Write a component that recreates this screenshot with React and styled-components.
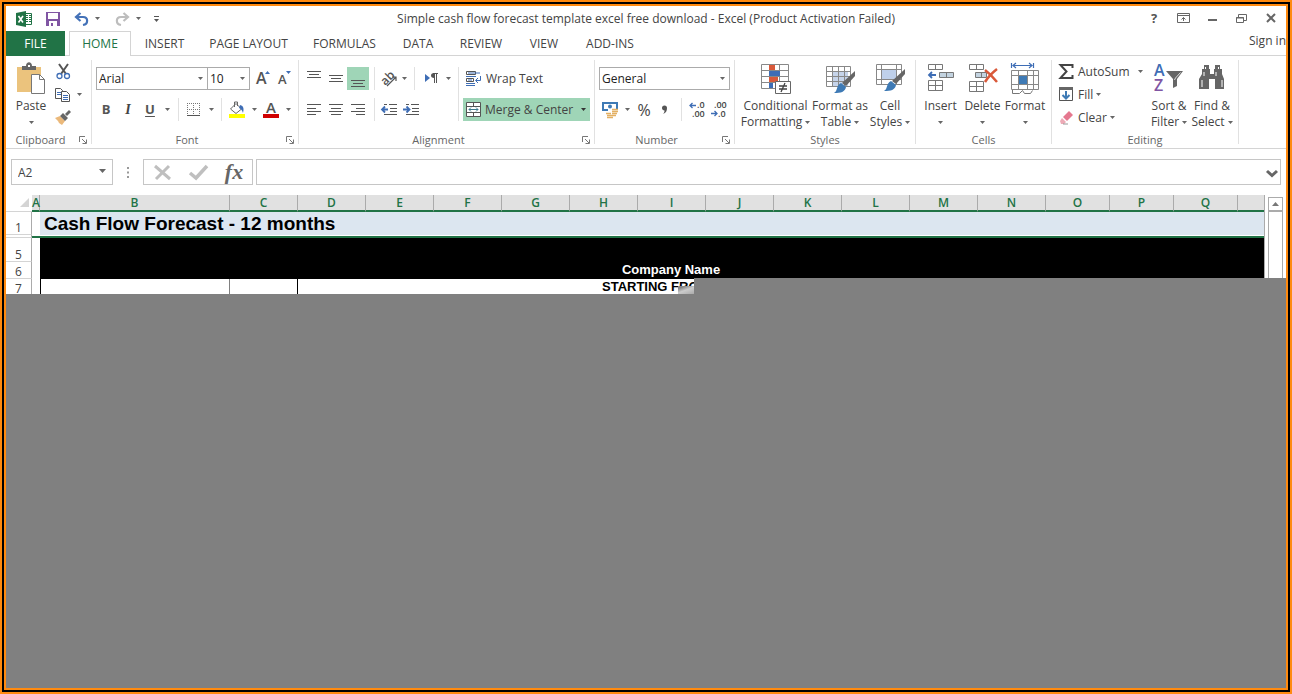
import React, { useState } from 'react';
import styled, { createGlobalStyle } from 'styled-components';

const GlobalStyle = createGlobalStyle`
  * {
    box-sizing: border-box;
  }
  body {
    margin: 0;
    font-family: "Open Sans", "Noto Sans", sans-serif;
    font-size: 12px;
    line-height: 16px;
    color: #444;
  }
  button, input, select {
    font: inherit;
    color: inherit;
  }
  svg {
    overflow: visible;
  }
`

const Frame = styled.div`
  border: 2px solid #ff8a0f;
  background: #000;
  padding: 2px;
  min-height: 100vh;
  display: flex;
`

const Window = styled.div`
  flex: 1;
  min-width: 0;
  border: 2px solid #ff8a0f;
  background: #fff;
  display: flex;
  flex-direction: column;
  overflow: hidden;
`

/* ---------- title bar ---------- */

const TitleBar = styled.header`
  height: 25px;
  display: grid;
  grid-template-columns: 1fr auto 1fr;
  align-items: center;
`

const QuickAccess = styled.div`
  display: flex;
  align-items: center;
  padding-left: 7px;
`

const WindowTitle = styled.h1`
  margin: 0;
  font-size: 12px;
  font-weight: 400;
  white-space: nowrap;
`

const WindowButtons = styled.div`
  display: flex;
  justify-content: flex-end;
`

const Tool = styled.button`
  width: ${p => p.$w || 22}px;
  height: 23px;
  flex: none;
  padding: 0;
  border: none;
  background: ${p => (p.$on ? '#9fd5b7' : 'none')};
  display: flex;
  align-items: center;
  justify-content: center;
  cursor: pointer;

  svg {
    display: block;
    flex: none;
  }
`

/* ---------- tabs ---------- */

const TabBar = styled.nav`
  height: 25px;
  display: flex;
  border-bottom: 1px solid #d4d4d4;
`

const FileTab = styled.button`
  width: 59px;
  height: 25px;
  border: none;
  padding: 0;
  background: #217346;
  color: #fff;
  cursor: pointer;
`

const Tab = styled.button`
  height: 25px;
  width: ${p => p.$w}px;
  padding: 0;
  border: 1px solid ${p => (p.$active ? '#d4d4d4' : 'transparent')};
  border-bottom: none;
  background: ${p => (p.$active ? '#fff' : 'none')};
  color: ${p => (p.$active ? '#217346' : '#444')};
  white-space: nowrap;
  cursor: pointer;
`

const TabGap = styled.span`
  width: 4px;
`

const ToolGap = styled.span`
  width: 8px;
`

const SignIn = styled.a`
  margin-left: auto;
  padding-top: 2px;
  color: #444;
  text-decoration: none;
  white-space: nowrap;
`

/* ---------- ribbon ---------- */

const Ribbon = styled.section`
  height: 93px;
  display: flex;
  border-bottom: 1px solid #d4d4d4;
`

const Group = styled.div`
  width: ${p => p.$w}px;
  flex: none;
  margin: 4px 0;
  border-right: 1px solid #e1e1e1;
  display: flex;
  flex-direction: column;
`

const GroupBody = styled.div`
  flex: 1;
  min-height: 0;
  display: flex;
  padding-left: ${p => p.$pad || 4}px;
`

const GroupFoot = styled.div`
  height: 16px;
  margin-bottom: -4px;
  display: flex;
  align-items: center;
  font-size: 11px;
  text-align: center;
  color: #666;
`

const GroupName = styled.span`
  flex: 1;
`

const Launcher = styled.button`
  width: 16px;
  height: 16px;
  padding: 0;
  border: none;
  background: none;
  display: flex;
  align-items: center;
  justify-content: center;
`

const Rows = styled.div`
  display: flex;
  flex-direction: column;
  gap: 8px;
  padding-top: 7px;
`

const Row = styled.div`
  display: flex;
  height: 23px;
`

const Divider = styled.span`
  width: ${p => p.$w || 9}px;
  flex: none;
  display: flex;
  justify-content: center;

  &::before {
    content: '';
    width: 1px;
    background: #e1e1e1;
  }
`

const TallDivider = styled(Divider)`
  margin-top: 7px;
  height: 54px;
`

const BigButton = styled.button`
  width: ${p => p.$w}px;
  flex: none;
  padding: 3px 0 0;
  border: none;
  background: none;
  display: flex;
  flex-direction: column;
  align-items: center;
  white-space: nowrap;
  cursor: pointer;

  > svg {
    margin-bottom: 3px;
    flex: none;
  }
`

const BigLine = styled.span`
  height: 16px;
  flex: none;
  display: flex;
  align-items: center;
  gap: 3px;
`

const SideTools = styled.div`
  display: flex;
  flex-direction: column;
`

const LabelTool = styled.button`
  height: 23px;
  width: ${p => (p.$w ? `${p.$w}px` : 'auto')};
  flex: none;
  padding: 0 4px 0 3px;
  border: none;
  background: ${p => (p.$on ? '#9fd5b7' : 'none')};
  display: flex;
  align-items: center;
  gap: 4px;
  white-space: nowrap;
  cursor: pointer;

  svg {
    flex: none;
  }
  svg:last-child:not(:first-child) {
    margin-left: auto;
  }
`

const EditTool = styled(LabelTool)`
  padding: 0;

  svg:last-child:not(:first-child) {
    margin-left: ${p => (p.$w ? 'auto' : '-1px')};
  }
`

const Glyph = styled.span`
  font-size: 14px;
  font-weight: 700;
  font-style: ${p => (p.$italic ? 'italic' : 'normal')};
  font-family: ${p => (p.$italic ? '"Liberation Serif", serif' : 'inherit')};
  text-decoration: ${p => (p.$under ? 'underline' : 'none')};
  text-underline-offset: 2px;
`

const SmallGlyph = styled(Glyph)`
  padding-bottom: 2px;
  font-size: 13px;
  color: #555;
`

const Percent = styled.span`
  font-size: 16px;
`

const Picker = styled.label`
  position: relative;
  display: block;
  width: ${p => p.$w}px;
  margin-left: ${p => (p.$joined ? -1 : 0)}px;

  select {
    appearance: none;
    width: 100%;
    height: 23px;
    padding: 0 2px;
    border: 1px solid #ababab;
    border-radius: 0;
    background: #fff;
    color: #222;
  }
  svg {
    position: absolute;
    right: 5px;
    top: 10px;
    pointer-events: none;
  }
`

const RibbonEnd = styled.div`
  flex: 1;
  display: flex;
  align-items: flex-end;
  justify-content: flex-end;
  padding-right: 5px;
`

/* ---------- formula bar ---------- */

const FormulaBar = styled.div`
  display: flex;
  align-items: stretch;
  height: 26px;
  margin: 10px 5px;
`

const NameBox = styled.label`
  position: relative;
  width: 102px;

  input {
    width: 100%;
    height: 26px;
    padding: 0 6px;
    border: 1px solid #c6c6c6;
  }
  svg {
    position: absolute;
    right: 7px;
    top: 10px;
  }
`

const Grip = styled.span`
  width: 30px;
  display: flex;
  align-items: center;
  justify-content: center;
`

const EntryButtons = styled.div`
  width: 110px;
  border: 1px solid #c6c6c6;
  display: flex;
  align-items: center;
`

const Fx = styled.span`
  font-family: "Liberation Serif", serif;
  font-size: 22px;
  font-style: italic;
  font-weight: 700;
  color: #666;
`

const FormulaField = styled.div`
  flex: 1;
  margin-left: 3px;
  border: 1px solid #c6c6c6;
  display: flex;
  align-items: center;

  input {
    flex: 1;
    min-width: 0;
    border: none;
    outline: none;
    background: none;
  }
`

/* ---------- sheet ---------- */

const SheetArea = styled.main`
  position: relative;
  display: flex;
  align-items: flex-start;
  height: 99px;
  overflow: hidden;
`

const Sheet = styled.table`
  flex: 1;
  min-width: 0;
  width: 100%;
  table-layout: fixed;
  border-collapse: separate;
  border-spacing: 0;
  border-right: 1px solid #ababab;
  font-family: "Liberation Sans", Arial, sans-serif;

  th, td {
    padding: 0;
  }
`

const ColHead = styled.th`
  height: 17px;
  background: #e1e1e1;
  border-right: 1px solid #ababab;
  border-bottom: 2px solid #217346;
  font-family: "Open Sans", "Noto Sans", sans-serif;
  font-size: 12px;
  line-height: 15px;
  font-weight: 600;
  color: #217346;

  &:last-child {
    border-right: none;
  }
`

const Corner = styled.td`
  height: 17px;
  border-bottom: 1px solid #d4d4d4;
  vertical-align: bottom;

  svg {
    display: block;
    margin: 0 3px 4px auto;
  }
`

const RowHead = styled.th`
  height: ${p => p.$h}px;
  border-right: 1px solid #ababab;
  border-bottom: 1px solid #d4d4d4;
  font-family: "Open Sans", "Noto Sans", sans-serif;
  font-size: 12px;
  line-height: 12px;
  font-weight: 400;
  vertical-align: bottom;
`

const HiddenRowHead = styled(RowHead)`
  line-height: 0;
`

const PlainCell = styled.td`
  background: #fff;
  border-left: ${p => (p.$start ? `1px solid ${p.$start}` : 'none')};
  border-right: ${p => (p.$edge ? `1px solid ${p.$edge}` : 'none')};
`

const TitleCell = styled.td`
  background: #dce6f0;
  padding-left: 4px !important;
  font-size: 19px;
  line-height: 22px;
  font-weight: 700;
  color: #000;
  vertical-align: bottom;
  white-space: nowrap;
`

const SelectedEdge = styled.td`
  border-top: 1px solid #fff;
  border-bottom: 2px solid #217346;
  background: #dce6f0;
`

const BlackCell = styled.td`
  background: #000;
  color: #fff;
  font-size: 13px;
  line-height: 16px;
  font-weight: 700;
  text-align: center;
  vertical-align: top;
  padding-left: 38px !important;
`

const StartCell = styled.td`
  background: #fff;
  color: #000;
  font-size: 13px;
  line-height: 16px;
  font-weight: 700;
  vertical-align: top;
  padding-left: 304px !important;
  white-space: nowrap;
`

const ScrollTrack = styled.div`
  align-self: stretch;
  width: 15px;
  margin: 2px 3px 0 3px;
  flex: none;
  border: 1px solid #ababab;
`

const ScrollUp = styled.button`
  width: 13px;
  height: 14px;
  padding: 0;
  border: none;
  border-bottom: 2px solid #ababab;
  background: #fff;
  display: flex;
  align-items: center;
  justify-content: center;
`

const Veil = styled.div`
  position: absolute;
  left: 688px;
  right: 0;
  bottom: 0;
  height: 16px;
  background: #808080;

  &::before {
    content: '';
    position: absolute;
    right: 100%;
    bottom: 0;
    width: 16px;
    height: 8px;
    background: linear-gradient(160deg, #888 20%, #ccc 50%, #aaa);
  }
`

const Backdrop = styled.div`
  flex: 1;
  background: #808080;
`

/* ---------- icons ---------- */

const Caret = ({ color = '#666' }) => (
  <svg width="5" height="3" viewBox="0 0 5 3" aria-hidden="true">
    <path d="M0 0h5L2.5 3z" fill={color} />
  </svg>
)

const Icon = ({ w = 16, h = 16, children }) => (
  <svg width={w} height={h} viewBox={`0 0 ${w} ${h}`} fill="none" aria-hidden="true">
    {children}
  </svg>
)

const ExcelIcon = () => (
  <Icon>
    <path d="M9 2.5h6.5v11H9" fill="#fff" stroke="#217346" />
    <path d="M10 4.5h2M13 4.5h2M10 6.5h2M13 6.5h2M10 8.5h2M13 8.5h2M10 10.5h2M13 10.5h2" stroke="#217346" />
    <path d="M0 2l10-2v16L0 14z" fill="#217346" />
    <path d="M2.5 5l4.5 6.5M7 5l-4.5 6.5" stroke="#fff" strokeWidth="1.6" />
  </Icon>
)

const SaveIcon = () => (
  <Icon w={14} h={14}>
    <path d="M0 0h14v14H0z" fill="#8055a3" />
    <path d="M2 1h10v6H2zM3 9h8v5H3z" fill="#fff" />
    <path d="M5 11h2v3H5z" fill="#8055a3" />
  </Icon>
)

const UndoIcon = () => (
  <Icon h={14}>
    <path d="M2 5h7c5.500 0 5.500 7 0 8" stroke="#4472b8" strokeWidth="2.200" />
    <path d="M6.500 1L2 5l4.500 4" stroke="#4472b8" strokeWidth="2.200" />
  </Icon>
)

const RedoIcon = () => (
  <Icon h={14}>
    <path d="M14 5H7c-5.500 0-5.500 7 0 8" stroke="#bdbdbd" strokeWidth="2.200" />
    <path d="M9.500 1L14 5l-4.500 4" stroke="#bdbdbd" strokeWidth="2.200" />
  </Icon>
)

const PasteIcon = () => (
  <Icon w={28} h={32}>
    <path d="M0 4h24v25H0z" fill="#ebc37d" />
    <path d="M5 7V3h4c0-5 6-5 6 0h4v4z" fill="#666" />
    <path d="M11 2h2v2h-2z" fill="#fff" />
    <path d="M14.500 11.500h8l5 5v14h-13z" fill="#fff" stroke="#777" />
    <path d="M22.500 11.500v5h5" stroke="#777" />
  </Icon>
)

const CutIcon = () => (
  <Icon w={15}>
    <path d="M3 0l7 10M12 0L5 10" stroke="#555" strokeWidth="2" />
    <circle cx="3.500" cy="12" r="2.500" stroke="#3e6db5" strokeWidth="1.300" />
    <circle cx="11" cy="12" r="2.500" stroke="#3e6db5" strokeWidth="1.300" />
  </Icon>
)

const CopyIcon = () => (
  <Icon w={16} h={14}>
    <path d="M.5 .5h5l2 2v8h-7z" fill="#fff" stroke="#555" />
    <path d="M2 4.500h4M2 6.500h4" stroke="#3e6db5" />
    <path d="M6.500 3.500h5l3 3v7h-8z" fill="#fff" stroke="#555" />
    <path d="M8 7.500h5M8 9.500h5M8 11.500h5" stroke="#3e6db5" />
  </Icon>
)

const BrushIcon = () => (
  <Icon w={16} h={15}>
    <path d="M0 8l5-2 5 5-3 4-3-2-1-2z" fill="#ebb97b" />
    <path d="M5 6l3-3 5 5-3 3zM10 4l4-4 2 2-4 4z" fill="#666" />
  </Icon>
)

const SizeIcon = ({ up }) => (
  <Icon w={15} h={18}>
    <text x="0" y="14" fontSize={up ? 16 : 13} fontWeight="600" fill="#555" fontFamily="Open Sans">A</text>
    <path d={up ? 'M9 4l2.500-3L14 4z' : 'M8 1h5l-2.500 3z'} fill="#3e6db5" />
  </Icon>
)

const BordersIcon = () => (
  <Icon w={14} h={14}>
    <path d="M.5 0v13M6.500 0v13M12.500 0v13M0 .5h13M0 6.500h13" stroke="#777" strokeDasharray="1 1" />
    <path d="M0 12.500h13" stroke="#555" />
  </Icon>
)

const FillIcon = () => (
  <Icon w={18} h={18}>
    <path d="M2.500 8L8 2.500 13.500 8 8 12.500z" fill="#fff" stroke="#666" />
    <path d="M6.500 6V1h3v4" stroke="#666" />
    <path d="M12 4c4 1 4 4 3 8-1-3-2-4-4-5z" fill="#3e6db5" />
    <path d="M1 13h16v4H1z" fill="#ff0" />
  </Icon>
)

const FontColorIcon = () => (
  <Icon w={16} h={18}>
    <text x="3" y="12" fontSize="15" fontWeight="600" fill="#555" fontFamily="Open Sans">A</text>
    <path d="M0 13h16v4H0z" fill="#d00000" />
  </Icon>
)

const LinesIcon = ({ lines, h = 16 }) => (
  <Icon w={14} h={h}>
    {lines.map(([y, x1, x2]) => (
      <path key={y} d={`M${x1} ${y + 0.5}H${x2}`} stroke="#555" />
    ))}
  </Icon>
)

const AngleIcon = () => (
  <Icon w={17} h={16}>
    <text x="1" y="13" fontSize="12" fontWeight="600" fill="#555" fontFamily="Open Sans" transform="rotate(-45 5 10)">ab</text>
    <path d="M6 15l9-9M11 6h4v4" stroke="#555" strokeWidth="1.200" />
  </Icon>
)

const DirectionIcon = () => (
  <Icon w={13} h={11}>
    <path d="M0 1l5 4-5 4z" fill="#3e6db5" />
    <path d="M8 .5h5M9.500 0v10M11.500 0v10" stroke="#555" />
    <path d="M9 0c-4 0-4 5 0 5z" fill="#555" />
  </Icon>
)

const IndentIcon = ({ right }) => (
  <Icon w={17} h={12}>
    <path d="M8 .5h8M9 4.500h7M9 7.500h7M3 10.500h13M3 .5h3" stroke="#555" />
    {right
      ? <path d="M0 5.500h6M3.500 2.500l3 3-3 3" stroke="#3e6db5" strokeWidth="1.800" />
      : <path d="M1 5.500h6M4 2.500l-3 3 3 3" stroke="#3e6db5" strokeWidth="1.800" />}
  </Icon>
)

const WrapIcon = () => (
  <Icon w={16} h={16}>
    <path d="M.5 .5h9v3h-9zM.5 7.500h7v3h-7z" stroke="#555" />
    <path d="M2 2h12M0 5.500h10M0 12.500h9M0 14.500h9M2 9h4" stroke="#3e6db5" />
    <path d="M14.500 5v4.500H10M12 7l-2.500 2.500L12 12" stroke="#3e6db5" />
  </Icon>
)

const MergeIcon = () => (
  <Icon w={15} h={15}>
    <path d="M.5 .5h14v14H.5zM.5 4.500h14M.5 10.500h14M7.500 .5v4M7.500 10.500v4" fill="#fff" stroke="#555" />
    <path d="M3 7.500h9M5 5.500l-2 2 2 2M10 5.500l2 2-2 2" stroke="#3e7a8c" />
  </Icon>
)

const MoneyIcon = () => (
  <Icon w={17} h={16}>
    <path d="M1 1h14v7H1z" stroke="#3e7ab5" strokeWidth="2" />
    <circle cx="8" cy="4.500" r="2" fill="#3e7ab5" />
    <path d="M6 7h10v9H4v-5h2z" fill="#fff" />
    <path d="M10 7.500h6M10 9.500h6M10 11.500h5M4 11.500h5M5 13.500h9M5 15.500h6" stroke="#e3b063" strokeWidth="1.500" />
  </Icon>
)

const DecimalIcon = ({ more }) => (
  <Icon w={15} h={15}>
    <text x={more ? 7 : 3} y="6" fontSize="9" fontWeight="600" fill="#444" fontFamily="Open Sans">{more ? '.0' : '.00'}</text>
    <text x={more ? 2 : 7} y="15" fontSize="9" fontWeight="600" fill="#444" fontFamily="Open Sans">{more ? '.00' : '.0'}</text>
    <path d={more ? 'M0 3.500h6M2.500 1L0 3.500 2.500 6' : 'M0 11.500h6M3.500 9L6 11.500 3.500 14'} stroke="#3e6db5" strokeWidth="1.300" />
  </Icon>
)

const CondIcon = () => (
  <Icon w={30} h={32}>
    <path d="M.5 1.500h27v24H.5zM.5 7.500h27M.5 13.500h27M.5 19.500h27M8.500 1.500v24M18.500 1.500v24" stroke="#888" />
    <path d="M8 2h6v5H8zM8 14h9v5H8z" fill="#d9593a" />
    <path d="M8 8h11v5H8zM8 20h4v5H8z" fill="#3e6db5" />
    <path d="M14.500 18.500h15v12h-15z" fill="#fff" stroke="#666" />
    <path d="M18 23h8M18 26h8M24 20l-4 9" stroke="#444" strokeWidth="1.300" />
  </Icon>
)

const PaintBrush = () => (
  <g>
    <path d="M30 8v5l-9 10-4-3z" fill="#666" />
    <path d="M16 20l5 4c-1 5-5 6-12 6 4-2 2-8 7-10z" fill="#3e7ab5" />
  </g>
)

const TableIcon = () => (
  <Icon w={30} h={32}>
    <path d="M7 9h16v15H7z" fill="#c6d4ea" />
    <path d="M1.500 3.500h24v20h-24zM1.500 8.500h24M1.500 13.500h24M1.500 18.500h24M7.500 3.500v20M13.500 3.500v20M19.500 3.500v20" stroke="#888" />
    <PaintBrush />
  </Icon>
)

const CellIcon = () => (
  <Icon w={30} h={32}>
    <path d="M1.500 1.500h25v20h-25zM1.500 6.500h25M1.500 16.500h25M6.500 1.500v20M21.500 1.500v20" stroke="#888" />
    <path d="M7 7h14v9H7z" fill="#bfd0ea" />
    <g transform="translate(0 -2)">
      <PaintBrush />
    </g>
  </Icon>
)

const InsertIcon = () => (
  <Icon w={28} h={32}>
    <path d="M1.500 1.500h14v5h-14zM8.500 1.500v5M1.500 17.500h14v10h-14zM8.500 17.500v10M1.500 22.500h14" stroke="#777" />
    <path d="M12.500 9.500h14v5h-14zM19.500 9.500v5" fill="#c3d3e0" stroke="#777" />
    <path d="M2 12h7M5 9l-3 3 3 3" stroke="#3e6db5" strokeWidth="1.800" />
  </Icon>
)

const DeleteIcon = () => (
  <Icon w={30} h={32}>
    <path d="M1.500 1.500h14v5h-14zM8.500 1.500v5M1.500 18.500h14v10h-14zM8.500 18.500v10M1.500 23.500h14" stroke="#777" />
    <path d="M7.500 9.500h11v5h-11zM13.500 9.500v5" fill="#c3d3e0" stroke="#777" />
    <path d="M17 7c4 3 8 7 12 12M29 6c-5 4-9 8-12 13" stroke="#d9593a" strokeWidth="2.500" />
  </Icon>
)

const FormatIcon = () => (
  <Icon w={30} h={32}>
    <path d="M1.500 0v5M23.500 0v5M3 2.500h19M6 0L3 2.500 6 5M19 0l3 2.500L19 5" stroke="#3e6db5" strokeWidth="1.200" />
    <path d="M1.500 7.500h27v19h-27zM1.500 12.500h27M1.500 21.500h27M8.500 7.500v19M17.500 7.500v19M23.500 7.500v19" stroke="#888" />
    <path d="M9 13h8v8H9z" fill="#3e7ab5" />
    <path d="M2.500 27v3.500h7l3-3 2 3h6l2-3" stroke="#777" />
  </Icon>
)

const SumIcon = () => (
  <Icon w={15} h={15}>
    <path d="M13.500 4V1H1.500l6 6.500-6 6.500h12v-3" stroke="#444" strokeWidth="2" />
  </Icon>
)

const FillDownIcon = () => (
  <Icon w={15} h={15}>
    <path d="M.5 .5h13v13H.5z" stroke="#555" />
    <path d="M0 0h14v3H0z" fill="#666" />
    <path d="M7 4v7M3.500 8L7 11.500 10.500 8" stroke="#3e7ab5" strokeWidth="2" />
  </Icon>
)

const EraserIcon = () => (
  <Icon w={15} h={14}>
    <path d="M4 6l6-6 4 4-6 6z" fill="#e5788f" />
    <path d="M3 7l4 4-2 2H2l-1-3z" fill="#edaab6" />
    <path d="M4 13h5" stroke="#999" />
  </Icon>
)

const SortIcon = () => (
  <Icon w={30} h={32}>
    <text x="0" y="13" fontSize="16" fontWeight="600" fill="#3e6db5" fontFamily="Open Sans">A</text>
    <text x="0" y="28" fontSize="16" fontWeight="600" fill="#8055a3" fontFamily="Open Sans">Z</text>
    <path d="M12 8h17l-6 8v7l-4 2v-9z" fill="#666" />
    <path d="M20.500 17l1-2 5-5.500" stroke="#ddd" />
  </Icon>
)

const FindIcon = () => (
  <Icon w={28} h={32}>
    <path d="M6 2h5v4h1v5h4V6h1V2h5v4h2v5l2 5v10h-9v-10h-6v10H1V16l3-5V6h2z" fill="#666" />
    <path d="M7.500 4v2M20.500 4v2M4 17v7M24 17v7M6 9v4M18 9v4" stroke="#fff" />
  </Icon>
)

const LaunchIcon = () => (
  <Icon w={8} h={8}>
    <path d="M.5 6V.5H6M3 3l4 4M7.500 3.500v4h-4" stroke="#777" />
  </Icon>
)

/* ---------- parts ---------- */

const RibbonGroup = ({ name, w, pad, launcher, children }) => (
  <Group $w={w} role="group" aria-label={name}>
    <GroupBody $pad={pad}>{children}</GroupBody>
    <GroupFoot>
      <GroupName>{name}</GroupName>
      {launcher && <Launcher aria-label={`${name} settings`}><LaunchIcon /></Launcher>}
    </GroupFoot>
  </Group>
)

const Big = ({ w, icon, top, bottom }) => (
  <BigButton $w={w}>
    {icon}
    <BigLine>{top}</BigLine>
    <BigLine>{bottom}<Caret /></BigLine>
  </BigButton>
)

const CaretTool = ({ w = 12, label }) => (
  <Tool $w={w} aria-label={label}><Caret /></Tool>
)

const tabs = [
  { name: 'HOME', w: 62 },
  { name: 'INSERT', w: 67 },
  { name: 'PAGE LAYOUT', w: 101 },
  { name: 'FORMULAS', w: 91 },
  { name: 'DATA', w: 56 },
  { name: 'REVIEW', w: 70 },
  { name: 'VIEW', w: 56 },
  { name: 'ADD-INS', w: 76 },
]

const columns = [
  ['A', 8], ['B', 190], ['C', 68], ['D', 68], ['E', 68], ['F', 68], ['G', 68], ['H', 68], ['I', 68],
  ['J', 68], ['K', 68], ['L', 68], ['M', 68], ['N', 68], ['O', 64], ['P', 64], ['Q', 64], ['', 26],
]

const Col = styled.col`
  width: ${p => p.$w}px;
`

export default function App() {
  const [tab, setTab] = useState('HOME')
  const [formula, setFormula] = useState('')

  return (
    <Frame>
      <GlobalStyle />
      <Window>
        <TitleBar>
          <QuickAccess>
            <Tool aria-label="Excel"><ExcelIcon /></Tool>
            <Tool $w={36} aria-label="Save"><SaveIcon /></Tool>
            <Tool aria-label="Undo"><UndoIcon /></Tool>
            <CaretTool w={8} label="Undo list" />
            <ToolGap />
            <Tool $w={26} aria-label="Redo"><RedoIcon /></Tool>
            <CaretTool w={6} label="Redo list" />
            <Tool $w={32} aria-label="Customize toolbar">
              <Icon w={6} h={7}>
                <path d="M0 1.500h5" stroke="#555" />
                <path d="M0 4h5L2.500 7z" fill="#555" />
              </Icon>
            </Tool>
          </QuickAccess>
          <WindowTitle>Simple cash flow forecast template excel free download - Excel (Product Activation Failed)</WindowTitle>
          <WindowButtons>
            <Tool $w={30} aria-label="Help"><SmallGlyph>?</SmallGlyph></Tool>
            <Tool $w={29} aria-label="Ribbon options">
              <Icon w={13} h={11}>
                <path d="M.5 .5h12v9H.5zM.5 2.500h12M6.500 8V4.500M4.500 6.500l2-2 2 2" stroke="#666" />
              </Icon>
            </Tool>
            <Tool $w={29} aria-label="Minimize"><Icon w={9} h={5}><path d="M0 4h9" stroke="#666" strokeWidth="2" /></Icon></Tool>
            <Tool $w={29} aria-label="Restore">
              <Icon w={11} h={10}>
                <path d="M2.500 3V.5h8v6H8" stroke="#666" />
                <path d="M.5 3.500h7v5h-7zM0 4h8" stroke="#666" />
              </Icon>
            </Tool>
            <Tool $w={30} aria-label="Close"><Icon w={10} h={10}><path d="M1 0l8 8M9 0L1 8" stroke="#666" strokeWidth="2" /></Icon></Tool>
          </WindowButtons>
        </TitleBar>

        <TabBar>
          <FileTab>FILE</FileTab>
          <TabGap />
          {tabs.map(t => (
            <Tab key={t.name} $w={t.w} $active={t.name === tab} onClick={() => setTab(t.name)}>{t.name}</Tab>
          ))}
          <SignIn href="#signin">Sign in</SignIn>
        </TabBar>

        <Ribbon>
          <RibbonGroup name="Clipboard" w={86} launcher>
            <Big w={42} icon={<PasteIcon />} top="Paste" />
            <SideTools>
              <Tool aria-label="Cut"><CutIcon /></Tool>
              <Row>
                <Tool aria-label="Copy"><CopyIcon /></Tool>
                <CaretTool w={10} label="Copy options" />
              </Row>
              <Tool aria-label="Format painter"><BrushIcon /></Tool>
            </SideTools>
          </RibbonGroup>

          <RibbonGroup name="Font" w={207} launcher>
            <Rows>
              <Row>
                <Picker $w={112}>
                  <select aria-label="Font"><option>Arial</option></select>
                  <Caret />
                </Picker>
                <Picker $w={43} $joined>
                  <select aria-label="Font size"><option>10</option></select>
                  <Caret />
                </Picker>
                <Tool $w={26} aria-label="Increase font size"><SizeIcon up /></Tool>
                <Tool $w={18} aria-label="Decrease font size"><SizeIcon /></Tool>
              </Row>
              <Row>
                <Tool $w={20} aria-label="Bold"><SmallGlyph>B</SmallGlyph></Tool>
                <Tool $w={24} aria-label="Italic"><Glyph $italic>I</Glyph></Tool>
                <Tool $w={20} aria-label="Underline"><SmallGlyph $under>U</SmallGlyph></Tool>
                <CaretTool w={14} label="Underline style" />
                <Divider />
                <Tool aria-label="Borders"><BordersIcon /></Tool>
                <CaretTool label="Border style" />
                <Divider />
                <Tool aria-label="Fill color"><FillIcon /></Tool>
                <CaretTool label="Fill colors" />
                <Tool aria-label="Font color"><FontColorIcon /></Tool>
                <CaretTool label="Font colors" />
              </Row>
            </Rows>
          </RibbonGroup>

          <RibbonGroup name="Alignment" w={296} launcher>
            <Rows>
              <Row>
                <Tool aria-label="Top align"><LinesIcon lines={[[0, 0, 14], [3, 2, 12], [6, 0, 14]]} /></Tool>
                <Tool aria-label="Middle align"><LinesIcon lines={[[4, 0, 14], [7, 2, 12], [10, 0, 14]]} /></Tool>
                <Tool $on aria-label="Bottom align"><LinesIcon lines={[[9, 0, 14], [12, 2, 12], [15, 0, 14]]} /></Tool>
                <Divider $w={10} />
                <Tool $w={20} aria-label="Orientation"><AngleIcon /></Tool>
                <CaretTool w={10} label="Orientation list" />
                <Divider $w={11} />
                <Tool aria-label="Text direction"><DirectionIcon /></Tool>
                <CaretTool label="Text direction list" />
              </Row>
              <Row>
                <Tool aria-label="Align left"><LinesIcon h={12} lines={[[0, 0, 14], [4, 0, 9], [7, 0, 14], [10, 0, 9]]} /></Tool>
                <Tool aria-label="Center"><LinesIcon h={12} lines={[[0, 0, 14], [4, 2, 12], [7, 0, 14], [10, 2, 12]]} /></Tool>
                <Tool aria-label="Align right"><LinesIcon h={12} lines={[[0, 0, 14], [4, 5, 14], [7, 0, 14], [10, 5, 14]]} /></Tool>
                <Divider $w={10} />
                <Tool $w={20} aria-label="Decrease indent"><IndentIcon /></Tool>
                <Tool $w={24} aria-label="Increase indent"><IndentIcon right /></Tool>
              </Row>
            </Rows>
            <TallDivider $w={9} />
            <Rows>
              <LabelTool><WrapIcon />Wrap Text</LabelTool>
              <LabelTool $w={127} $on><MergeIcon />Merge &amp; Center<Caret color="#333" /></LabelTool>
            </Rows>
          </RibbonGroup>

          <RibbonGroup name="Number" w={140} launcher>
            <Rows>
              <Picker $w={131}>
                <select aria-label="Number format"><option>General</option></select>
                <Caret />
              </Picker>
              <Row>
                <Tool aria-label="Accounting format"><MoneyIcon /></Tool>
                <CaretTool label="Accounting formats" />
                <Tool aria-label="Percent"><Percent>%</Percent></Tool>
                <Tool $w={20} aria-label="Comma">
                  <Icon w={6} h={10}><path d="M0 3a2.500 2.500 0 0 1 5 0c0 3-1 5-4 6 1-1 1.500-2 1.500-3.500C1 5.500 0 4.500 0 3z" fill="#555" /></Icon>
                </Tool>
                <Divider $w={12} />
                <Tool $w={20} aria-label="Increase decimal"><DecimalIcon more /></Tool>
                <Tool aria-label="Decrease decimal"><DecimalIcon /></Tool>
              </Row>
            </Rows>
          </RibbonGroup>

          <RibbonGroup name="Styles" w={181} pad={3}>
            <Big w={75} icon={<CondIcon />} top="Conditional" bottom="Formatting" />
            <Big w={54} icon={<TableIcon />} top="Format as" bottom="Table" />
            <Big w={46} icon={<CellIcon />} top="Cell" bottom="Styles" />
          </RibbonGroup>

          <RibbonGroup name="Cells" w={136}>
            <Big w={41} icon={<InsertIcon />} top="Insert" />
            <Big w={43} icon={<DeleteIcon />} top="Delete" />
            <Big w={42} icon={<FormatIcon />} top="Format" />
          </RibbonGroup>

          <RibbonGroup name="Editing" w={187} pad={7}>
            <SideTools>
              <EditTool $w={84}><SumIcon />AutoSum<Caret /></EditTool>
              <EditTool><FillDownIcon />Fill<Caret /></EditTool>
              <EditTool><EraserIcon />Clear<Caret /></EditTool>
            </SideTools>
            <TabGap />
            <Big w={44} icon={<SortIcon />} top="Sort &amp;" bottom="Filter" />
            <Big w={42} icon={<FindIcon />} top="Find &amp;" bottom="Select" />
          </RibbonGroup>

          <RibbonEnd>
            <Tool aria-label="Collapse ribbon" $w={20}>
              <Icon w={9} h={0}><path d="M1 5l3.500-3.500L8 5" stroke="#666" strokeWidth="2" /></Icon>
            </Tool>
          </RibbonEnd>
        </Ribbon>

        <FormulaBar>
          <NameBox>
            <input aria-label="Name box" defaultValue="A2" />
            <Icon w={7} h={5}><path d="M0 0h7L3.500 4z" fill="#666" /></Icon>
          </NameBox>
          <Grip><Icon w={2} h={11}><path d="M0 1h2M0 5.500h2M0 10h2" stroke="#999" strokeWidth="2" /></Icon></Grip>
          <EntryButtons>
            <Tool $w={36} aria-label="Cancel"><Icon w={17} h={15}><path d="M1 1l15 13M15 1L2 14" stroke="#bfbfbf" strokeWidth="3" /></Icon></Tool>
            <Tool $w={36} aria-label="Enter"><Icon w={19} h={15}><path d="M1 8l6 5L18 1" stroke="#bfbfbf" strokeWidth="3.500" /></Icon></Tool>
            <Tool $w={36} aria-label="Insert function"><Fx>fx</Fx></Tool>
          </EntryButtons>
          <FormulaField>
            <input aria-label="Formula" value={formula} onChange={e => setFormula(e.target.value)} />
            <Tool $w={16} aria-label="Expand formula bar">
              <Icon w={12} h={7}><path d="M1 2l5 4.500L11 2" stroke="#666" strokeWidth="3" /></Icon>
            </Tool>
          </FormulaField>
        </FormulaBar>

        <SheetArea>
          <Sheet>
            <colgroup>
              <Col $w={26} />
              {columns.map(([name, w]) => <Col key={name} $w={w} />)}
            </colgroup>
            <thead>
              <tr>
                <Corner><Icon w={9} h={9}><path d="M9 0v9H0z" fill="#d4d4d4" /></Icon></Corner>
                {columns.map(([name]) => <ColHead key={name} scope="col">{name}</ColHead>)}
              </tr>
            </thead>
            <tbody>
              <tr>
                <RowHead scope="row" $h={23}>1</RowHead>
                <PlainCell />
                <TitleCell colSpan={17}>Cash Flow Forecast - 12 months</TitleCell>
              </tr>
              <tr>
                <HiddenRowHead as="td" $h={3} />
                <SelectedEdge colSpan={18} />
              </tr>
              <tr>
                <RowHead scope="row" $h={24}>5</RowHead>
                <PlainCell />
                <BlackCell colSpan={17} />
              </tr>
              <tr>
                <RowHead scope="row" $h={17}>6</RowHead>
                <PlainCell />
                <BlackCell colSpan={17}>Company Name</BlackCell>
              </tr>
              <tr>
                <RowHead scope="row" $h={17}>7</RowHead>
                <PlainCell />
                <PlainCell $start="#000" $edge="#808080" />
                <PlainCell $edge="#000" />
                <StartCell colSpan={15}>STARTING FROM:</StartCell>
              </tr>
            </tbody>
          </Sheet>
          <ScrollTrack>
            <ScrollUp aria-label="Scroll up"><Icon w={7} h={4}><path d="M0 4l3.500-4L7 4z" fill="#777" /></Icon></ScrollUp>
          </ScrollTrack>
          <Veil />
        </SheetArea>
        <Backdrop />
      </Window>
    </Frame>
  )
}
